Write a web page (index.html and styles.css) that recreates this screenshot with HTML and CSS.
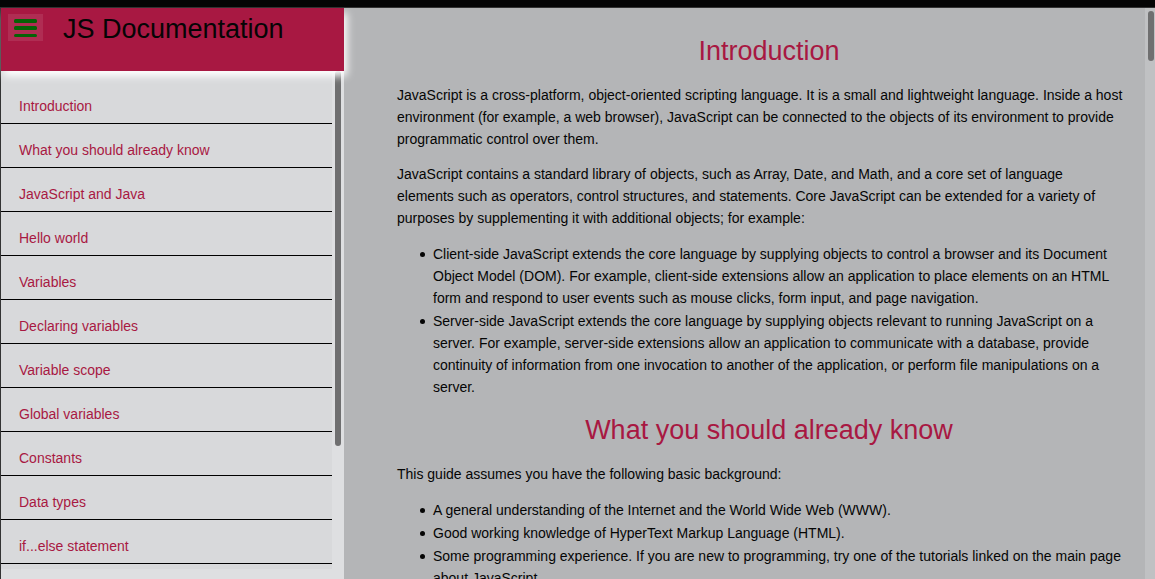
FILE: index.html
```
<!DOCTYPE html>
<html lang="en">
<head>
<meta charset="utf-8">
<title>JS Documentation</title>
<link rel="stylesheet" href="styles.css">
</head>
<body>
<div class="topbar"></div>
<div class="layout">
  <nav class="sidebar" aria-label="Sections">
    <header class="brand">
      <button class="menu-button" type="button" aria-label="Toggle menu">
        <svg width="23" height="19" viewBox="0 0 23 19" aria-hidden="true"><g fill="#066206"><rect y="0" width="23" height="4" rx="1.5"/><rect y="7" width="23" height="4" rx="1.5"/><rect y="15" width="23" height="3" rx="1.5"/></g></svg>
      </button>
      <h1 class="brand-title">JS Documentation</h1>
    </header>
    <div class="nav-body">
      <ul class="nav-list">
        <li><a class="nav-link" href="#introduction">Introduction</a></li>
        <li><a class="nav-link" href="#know">What you should already know</a></li>
        <li><a class="nav-link" href="#java">JavaScript and Java</a></li>
        <li><a class="nav-link" href="#hello">Hello world</a></li>
        <li><a class="nav-link" href="#variables">Variables</a></li>
        <li><a class="nav-link" href="#declaring">Declaring variables</a></li>
        <li><a class="nav-link" href="#scope">Variable scope</a></li>
        <li><a class="nav-link" href="#global">Global variables</a></li>
        <li><a class="nav-link" href="#constants">Constants</a></li>
        <li><a class="nav-link" href="#types">Data types</a></li>
        <li><a class="nav-link" href="#ifelse">if...else statement</a></li>
      </ul>
      <div class="track nav-track"><div class="thumb nav-thumb"></div></div>
    </div>
  </nav>
  <main class="content">
    <div class="article">
      <section id="introduction">
        <h2 class="heading">Introduction</h2>
        <p class="text">JavaScript is a cross-platform, object-oriented scripting language. It is a small and lightweight language. Inside a host environment (for example, a web browser), JavaScript can be connected to the objects of its environment to provide programmatic control over them.</p>
        <p class="text">JavaScript contains a standard library of objects, such as Array, Date, and Math, and a core set of language<br>elements such as operators, control structures, and statements. Core JavaScript can be extended for a variety of purposes by supplementing it with additional objects; for example:</p>
        <ul class="bullets">
          <li>Client-side JavaScript extends the core language by supplying objects to control a browser and its Document Object Model (DOM). For example, client-side extensions allow an application to place elements on an HTML form and respond to user events such as mouse clicks, form input, and page navigation.</li>
          <li>Server-side JavaScript extends the core language by supplying objects relevant to running JavaScript on a server. For example, server-side extensions allow an application to communicate with a database, provide continuity of information from one invocation to another of the application, or perform file manipulations on a server.</li>
        </ul>
      </section>
      <section id="know">
        <h2 class="heading">What you should already know</h2>
        <p class="text">This guide assumes you have the following basic background:</p>
        <ul class="bullets">
          <li>A general understanding of the Internet and the World Wide Web (WWW).</li>
          <li>Good working knowledge of HyperText Markup Language (HTML).</li>
          <li>Some programming experience. If you are new to programming, try one of the tutorials linked on the main page about JavaScript.</li>
        </ul>
      </section>
    </div>
    <div class="track"><div class="thumb"></div></div>
  </main>
</div>
</body>
</html>
```
FILE: styles.css
```
* { box-sizing: border-box; }
body {
  margin: 0;
  height: 100vh;
  display: flex;
  flex-direction: column;
  overflow: hidden;
  font-family: "Liberation Sans", Arial, sans-serif;
  font-size: 14px;
  line-height: 22px;
  color: #050505;
  background: #b4b5b7;
}
.topbar {
  position: relative;
  z-index: 2;
  flex: 0 0 8px;
  background: #050505;
  border-bottom: 1px solid #333;
}
.layout { flex: 1; min-height: 0; display: flex; }
.sidebar {
  flex: 0 0 344px;
  display: flex;
  flex-direction: column;
  border-left: 1px solid #333;
  background: #dedfe1;
}
.brand {
  position: relative;
  flex: 0 0 63px;
  display: flex;
  align-items: flex-start;
  gap: 20px;
  padding: 6px 7px;
  background: #a81842;
  box-shadow: 3px 5px 8px #fff;
}
.menu-button {
  display: flex;
  padding: 5px 6px 3px;
  border: 0;
  background: #b02d53;
}
.brand-title {
  margin: 0;
  font-size: 27px;
  font-weight: 400;
  line-height: 30px;
}
.nav-body { flex: 1; min-height: 0; display: flex; }
.nav-list {
  flex: 1;
  align-self: flex-start;
  margin: 0;
  padding: 9px 0 5px;
  list-style: none;
  background: #d8d9db;
}
.nav-link {
  display: block;
  padding: 15px 18px 6px;
  border-bottom: 1px solid #000;
  color: #a81842;
  text-decoration: none;
}
.track {
  flex: 0 0 10px;
  padding: 3px 1px 3px 3px;
  background: #c0c1c3;
}
.thumb {
  height: 50px;
  border-radius: 3px;
  background: #6f6f70;
}
.nav-track {
  flex-basis: 12px;
  padding: 0 3px;
  background: #dedfe1;
}
.nav-thumb { height: 375px; }
.content { flex: 1; min-width: 0; display: flex; overflow: hidden; }
.article { flex: 1; min-width: 0; padding: 27px 4px 0 53px; }
.heading {
  margin: 0 0 17px;
  font-size: 27px;
  font-weight: 400;
  line-height: 32px;
  text-align: center;
  color: #a81842;
}
.text { margin: 0 0 13px; padding-right: 16px; }
.bullets {
  margin: 14px 0 16px;
  padding: 0 16px 0 36px;
  list-style: none;
}
.bullets li + li { margin-top: 1px; }
.bullets li::before {
  content: "";
  display: inline-block;
  width: 5px;
  height: 5px;
  margin: 0 8px 2px -13px;
  border-radius: 50%;
  background: #050505;
}
```
